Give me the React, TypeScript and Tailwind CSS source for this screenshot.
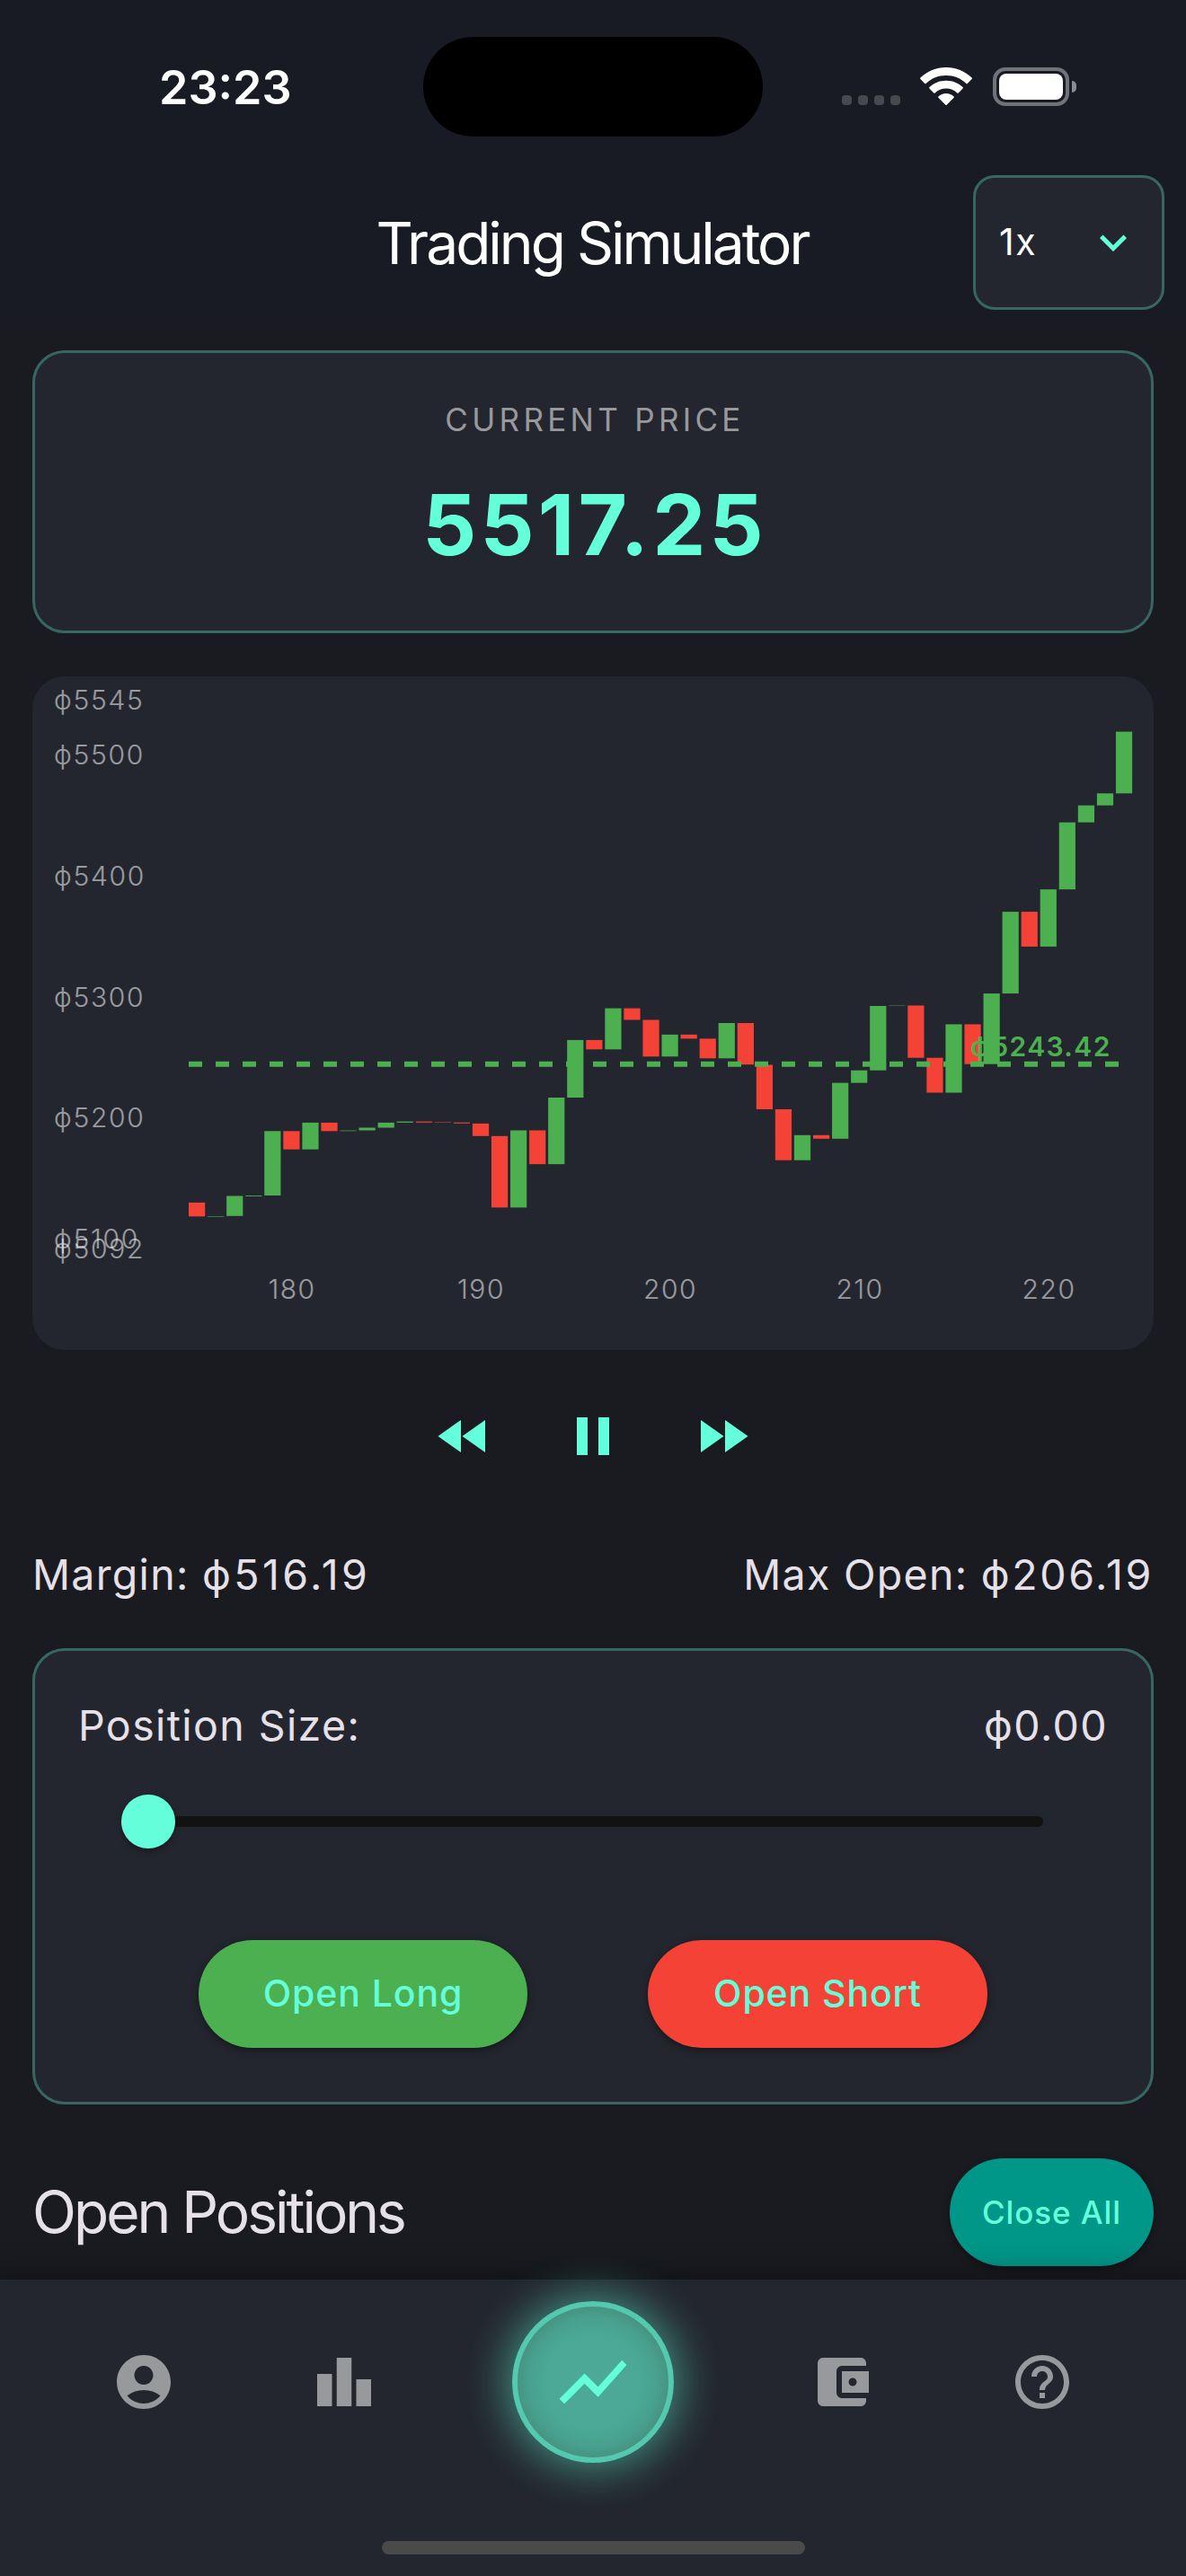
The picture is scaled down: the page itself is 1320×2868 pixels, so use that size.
import {
  MdAccountBalanceWallet,
  MdAccountCircle,
  MdFastForward,
  MdFastRewind,
  MdHelpOutline,
  MdKeyboardArrowDown,
  MdLeaderboard,
  MdPause,
  MdShowChart,
} from 'react-icons/md';

const GREEN = '#4caf50';
const RED = '#f44336';

// [direction, body top, body bottom] in chart pixels
const candles: [string, number, number][] = [
  ['down', 1338.9, 1354.3],
  ['up', 1354, 1354.6],
  ['up', 1331.5, 1353.8],
  ['up', 1331, 1331.9],
  ['up', 1259.3, 1331],
  ['down', 1259.3, 1279.7],
  ['up', 1249.9, 1279.7],
  ['down', 1249.9, 1259.3],
  ['up', 1258.6, 1259.3],
  ['up', 1255.5, 1258.5],
  ['up', 1249.9, 1255.5],
  ['up', 1248.6, 1249.9],
  ['down', 1248.6, 1249.8],
  ['down', 1249, 1249.5],
  ['down', 1249.7, 1250.8],
  ['down', 1250.9, 1264.8],
  ['down', 1264.8, 1344.4],
  ['up', 1258.5, 1344.4],
  ['down', 1258.5, 1296.1],
  ['up', 1222, 1296.1],
  ['up', 1157.9, 1222],
  ['down', 1157.9, 1168.3],
  ['up', 1122.6, 1168.3],
  ['down', 1122.6, 1135.5],
  ['down', 1135.5, 1176.3],
  ['up', 1151.9, 1176.3],
  ['down', 1151.9, 1156.4],
  ['down', 1156.4, 1178.3],
  ['up', 1139, 1178.3],
  ['down', 1139, 1185.2],
  ['down', 1185.5, 1235],
  ['down', 1235, 1291.7],
  ['up', 1263.8, 1291.7],
  ['down', 1263.8, 1267.8],
  ['up', 1205.6, 1267.8],
  ['up', 1191.7, 1205.6],
  ['up', 1120, 1191.7],
  ['up', 1119.5, 1119.9],
  ['down', 1119.5, 1177.7],
  ['down', 1177.7, 1216.5],
  ['up', 1140.4, 1216.5],
  ['down', 1140.4, 1184.7],
  ['up', 1106.1, 1184.7],
  ['up', 1015.1, 1106.1],
  ['down', 1015.1, 1053.9],
  ['up', 990.2, 1053.9],
  ['up', 915.6, 990.2],
  ['up', 896.7, 915.6],
  ['up', 883.3, 896.7],
  ['up', 814.6, 883.3],
];

const priceTicks = [
  { label: 'ϕ5545', y: 789.5 },
  { label: 'ϕ5500', y: 850.5 },
  { label: 'ϕ5400', y: 985.5 },
  { label: 'ϕ5300', y: 1120.5 },
  { label: 'ϕ5200', y: 1255 },
  { label: 'ϕ5100', y: 1390 },
  { label: 'ϕ5092', y: 1401 },
];

const timeTicks = [
  { label: '180', x: 325 },
  { label: '190', x: 535.5 },
  { label: '200', x: 746 },
  { label: '210', x: 957 },
  { label: '220', x: 1167.5 },
];

const StatusBar = () => (
  <div className="flex h-[171px]">
    <div className="w-[471px] pt-[66px] pl-[177px]">
      <div className="text-[52px] leading-[64px] font-semibold text-white">23:23</div>
    </div>
    <div className="mt-[41px] h-[111px] w-[378px] rounded-full bg-black" />
    <div className="mt-[75px] flex h-[43px] flex-1 pl-[88px]">
      <div className="mt-[31px] flex gap-[7px]">
        {[0, 1, 2, 3].map((dot) => (
          <div key={dot} className="h-[11px] w-[11px] rounded-[4px] bg-[#48494e]" />
        ))}
      </div>
      <svg className="ml-[22px] h-[43px] w-[58px]" viewBox="0 0 58 43" fill="#fff">
        <path d="M29 0C40 0 50 4.300 57.600 11.500Q58.200 12.200 57.600 12.900L52.800 17.900Q52.100 18.500 51.400 17.900C45.500 12.300 37.600 9 29 9S12.500 12.300 6.600 17.900Q5.900 18.500 5.200 17.900L.4 12.900Q-.2 12.200 .4 11.500C8 4.300 18 0 29 0Z" />
        <path d="M29 14.800C36.300 14.800 42.700 17.500 47.600 22.100Q48.200 22.800 47.600 23.500L42.700 28.400Q42 29 41.300 28.400C38 25.400 33.700 23.600 29 23.600S20 25.400 16.700 28.400Q16 29 15.300 28.400L10.400 23.500Q9.800 22.800 10.400 22.100C15.300 17.500 21.700 14.800 29 14.800Z" />
        <path d="M29 29C32.300 29 35.400 30.300 37.600 32.400Q38.200 33 37.600 33.700L29.700 41.700Q29 42.300 28.300 41.700L20.400 33.700Q19.800 33 20.400 32.400C22.600 30.300 25.700 29 29 29Z" />
      </svg>
      <div className="ml-[23px] h-[43px] w-[85px] rounded-[14px] border-4 border-[#727378] p-[3px]">
        <div className="h-full w-full rounded-[8px] bg-white" />
      </div>
      <div className="mt-[15px] ml-[3px] h-[13px] w-[5px] rounded-r-full bg-[#8b8c90]" />
    </div>
  </div>
);

const Chart = () => (
  <svg
    className="mt-12 block h-[750px] w-full rounded-[36px] bg-[#24262f]"
    viewBox="36 753 1248 750"
  >
    {candles.map(([direction, top, bottom], index) => (
      <rect
        key={index}
        x={210 + index * 21.06}
        y={top}
        width={18.2}
        height={bottom - top}
        fill={direction === 'up' ? GREEN : RED}
      />
    ))}
    <line x1={210} x2={1246} y1={1184.7} y2={1184.7} stroke={GREEN} strokeWidth={6} strokeDasharray="15 15" />
    <text x={1080} y={1175.5} fill={GREEN} className="text-[30px] font-semibold tracking-[1.4px]">
      ϕ5243.42
    </text>
    {priceTicks.map((tick) => (
      <text key={tick.label} x={60} y={tick.y} className="fill-white/54 text-[30px] font-[350] tracking-[1.7px]">
        {tick.label}
      </text>
    ))}
    {timeTicks.map((tick) => (
      <text
        key={tick.label}
        x={tick.x}
        y={1445.5}
        textAnchor="middle"
        className="fill-white/54 text-[30px] font-[350] tracking-[1.5px]"
      >
        {tick.label}
      </text>
    ))}
  </svg>
);

const BottomNav = () => (
  <nav className="relative h-[330px] bg-[#24262f] shadow-[0_0_30px_6px_rgba(0,0,0,0.35)]">
    <div className="flex h-[228px] items-center justify-around px-12 text-[72px] text-[#98999d]">
      <MdAccountCircle />
      <MdLeaderboard />
      <div className="flex h-[180px] w-[180px] items-center justify-center rounded-full border-[6px] border-[#53c9af] bg-[radial-gradient(circle_closest-side,#4daa98_0%,#4ba896_65%,#48a08e_85%,#479481_100%)] text-[90px] text-[#64ffda] shadow-[0_0_45px_6px_rgba(100,255,218,0.45),0_0_90px_6px_rgba(100,255,218,0.08)]">
        <MdShowChart />
      </div>
      <MdAccountBalanceWallet />
      <MdHelpOutline />
    </div>
    <div className="mx-auto mt-[63px] h-[15px] w-[471px] rounded-full bg-[#4a4a4a]" />
  </nav>
);

const App = () => {
  return (
    <div className="flex h-[2868px] w-[1320px] flex-col overflow-hidden bg-[#1a1b20] font-['Inter','Noto_Sans',sans-serif] text-[#e6e0e9]">
      <header className="h-[353px] shrink-0 bg-[#181b23]">
        <StatusBar />
        <div className="flex justify-between pt-6 pr-6">
          <div className="w-[213px]" />
          <h1 className="pt-[36px] pl-[22px] text-[64px] leading-[80px] tracking-[-3px] whitespace-nowrap text-white">
            Trading Simulator
          </h1>
          <div className="flex h-[150px] w-[213px] items-center justify-between rounded-[24px] border-[3px] border-[#376762] bg-[#24262f] pr-[24px] pl-[26px]">
            <span className="text-[41px] tracking-[1.5px] text-white">1x</span>
            <MdKeyboardArrowDown className="text-[60px] text-[#64ffda]" />
          </div>
        </div>
      </header>

      <main className="h-[2185px] shrink-0 px-9 pt-[37px]">
        <section className="flex h-[315px] flex-col items-center rounded-[36px] border-[3px] border-[#376762] bg-[#24262f] pt-[51px]">
          <div className="pl-1 text-[35px] leading-[46px] tracking-[4.3px] text-[#98999d]">CURRENT PRICE</div>
          <div className="mt-[38px] pl-1 text-[94px] leading-[112px] font-bold tracking-[4.2px] text-[#64ffda]">
            5517.25
          </div>
        </section>

        <Chart />

        <div className="flex justify-center gap-[72px] pt-[60px] text-[72px] text-[#64ffda]">
          <MdFastRewind />
          <MdPause />
          <MdFastForward />
        </div>

        <div className="mt-[88px] flex justify-between text-[46.5px] leading-[60px] tracking-[1.3px] whitespace-nowrap">
          <div>
            Margin: <span className="tracking-[3.4px]">ϕ516.19</span>
          </div>
          <div>
            Max Open: <span className="tracking-[2.6px]">ϕ206.19</span>
          </div>
        </div>

        <section className="mt-[52px] h-[508px] rounded-[36px] border-[3px] border-[#376762] bg-[#24262f] px-12 pt-[53px]">
          <div className="flex justify-between text-[46.5px] leading-[60px] tracking-[1.4px]">
            <span>Position Size:</span>
            <span>ϕ0.00</span>
          </div>
          <div className="mt-[47px] ml-[48px] flex h-[60px] w-[1026px] items-center">
            <div className="h-[60px] w-[60px] rounded-full bg-[#64ffda] shadow-[0_3px_6px_rgba(0,0,0,0.4)]" />
            <div className="h-[12px] flex-1 rounded-r-full bg-[#121212]" />
          </div>
          <div className="mt-[102px] flex justify-evenly text-[41px] font-medium tracking-[0.9px] text-[#64ffda]">
            <button className="h-[120px] w-[366px] rounded-full bg-[#4caf50] shadow-[0_3px_8px_rgba(0,0,0,0.4)]">
              Open Long
            </button>
            <button className="h-[120px] w-[378px] rounded-full bg-[#f44336] shadow-[0_3px_8px_rgba(0,0,0,0.4)]">
              Open Short
            </button>
          </div>
        </section>

        <div className="mt-[60px] flex items-center justify-between">
          <h2 className="text-[64px] tracking-[-3px]">Open Positions</h2>
          <button className="h-[120px] w-[227px] rounded-full bg-[#009688] text-[35px] font-medium tracking-[0.9px] text-[#64ffda] shadow-[0_3px_8px_rgba(0,0,0,0.4)]">
            Close All
          </button>
        </div>
      </main>

      <BottomNav />
    </div>
  );
};

export default App;
